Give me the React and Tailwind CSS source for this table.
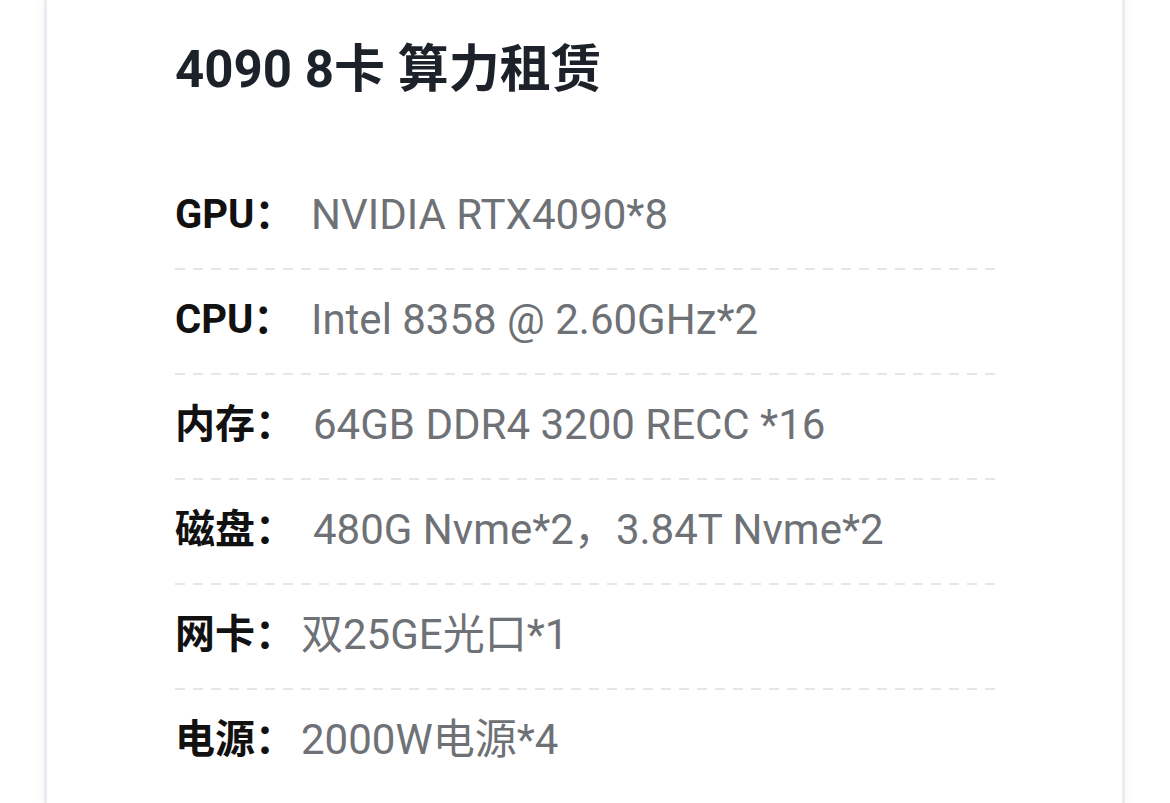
const specs = [
  { label: "GPU：", value: "NVIDIA RTX4090*8", w: "w-[136px]" },
  { label: "CPU：", value: "Intel 8358 @ 2.60GHz*2", w: "w-[136px]" },
  { label: "内存：", value: "64GB DDR4 3200 RECC *16", w: "w-[138px]" },
  { label: "磁盘：", value: "480G Nvme*2，3.84T Nvme*2", w: "w-[138px]" },
  { label: "网卡：", value: "双25GE光口*1", w: "w-[126px]" },
  { label: "电源：", value: "2000W电源*4", w: "w-[126px]" },
]

const SpecRow = ({ label, value, w, last }) => (
  <div>
    <div className="flex items-center h-[103px] pb-[3px] leading-none">
      <span className={`${w} shrink-0 text-[40px] font-bold text-[#111111]`}>{label}</span>
      <span className="text-[42px] text-[#6e7176] whitespace-nowrap">{value}</span>
    </div>
    {!last && (
      <div className="h-[2px] w-[820px] bg-[repeating-linear-gradient(90deg,#e5e6ea_0px,#e5e6ea_10px,transparent_10px,transparent_18px)]" />
    )}
  </div>
)

export default function App() {
  return (
    <div
      className="min-h-screen bg-white"
      style={{ fontFamily: 'Roboto, "Noto Sans CJK SC", sans-serif' }}
    >
      <div className="ml-[44px] w-[1081px] h-[803px] overflow-hidden border-x-[3px] border-[#ebebf2] bg-white shadow-[0_0_10px_rgba(40,40,90,0.06)]">
        <div className="pl-[128px]">
          <div className="h-[165px] pt-[40px]">
            <h1 className="text-[51px] leading-[60px] font-bold text-[#1d2129] whitespace-nowrap">
              4090 8卡 算力租赁
            </h1>
          </div>
          {specs.map((s, i) => (
            <SpecRow key={s.label} {...s} last={i === specs.length - 1} />
          ))}
        </div>
      </div>
    </div>
  )
}
